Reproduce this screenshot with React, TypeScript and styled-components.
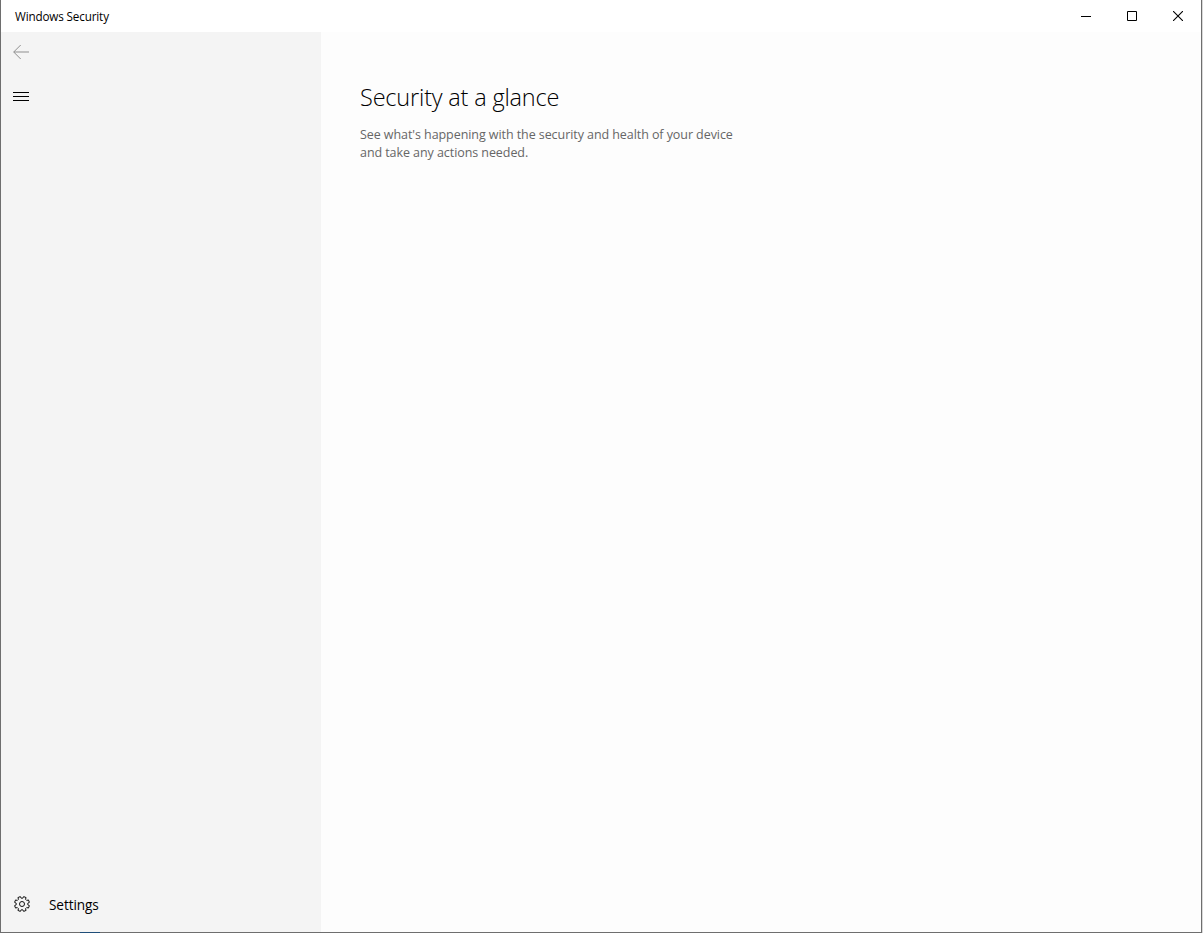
import styled, { createGlobalStyle } from "styled-components";

const GlobalStyle = createGlobalStyle`
    * {
        box-sizing: border-box;
    }

    body {
        margin: 0;
        overflow: hidden;
        background: #d9d9d9;
        font-family: "Open Sans", "Noto Sans", sans-serif;
    }

    h1, p {
        margin: 0;
    }
`

const StyleWindow = styled.div`
    width: 1202px;
    height: 933px;

    display: flex;
    flex-direction: column;
    position: relative;

    border: 1px solid #6e6e6e;
    border-top: none;
    background: #fdfdfd;
`

const StyleTitleBar = styled.header`
    height: 32px;
    flex-shrink: 0;

    display: flex;
    justify-content: space-between;
    background: #ffffff;

    .title {
        padding-left: 14px;
        font-size: 11.7px;
        line-height: 33px;
        letter-spacing: -0.15px;
        color: #000000;
    }
`

const StyleControls = styled.div`
    display: flex;
`

const StyleControlButton = styled.button`
    width: 46px;
    height: 32px;

    display: flex;
    align-items: center;
    justify-content: center;

    padding: 0;
    border: none;
    background: transparent;
`

const StyleContent = styled.div`
    flex: 1;
    display: flex;
`

const StyleSidebar = styled.nav`
    width: 320px;

    display: flex;
    flex-direction: column;
    background: #f4f4f4;
`

const StyleNavButton = styled.button<{ $height: number }>`
    width: 40px;
    height: ${({ $height }) => $height}px;

    display: flex;
    align-items: center;
    justify-content: center;

    padding: 0;
    border: none;
    background: transparent;
`

const StyleSettings = styled.a`
    height: 40px;

    display: flex;
    align-items: center;
    gap: 18px;

    margin-top: auto;
    margin-bottom: 8px;
    padding-left: 12px;

    font-size: 13.6px;
    line-height: 20px;
    letter-spacing: -0.08px;
    color: #000000;

    span {
        padding-top: 2px;
    }
`

const StyleMain = styled.main`
    flex: 1;
    padding: 47px 0 0 39px;

    h1 {
        font-size: 23.5px;
        font-weight: 350;
        line-height: 36px;
        letter-spacing: -0.18px;
        color: #000000;
    }

    p {
        width: 390px;
        margin-top: 11px;

        font-size: 12.5px;
        line-height: 18px;
        letter-spacing: -0.07px;
        color: #666666;
    }
`

const StyleAccent = styled.div`
    position: absolute;
    left: 79px;
    bottom: -1px;

    width: 20px;
    height: 1px;
    background: #1f4e79;
`

const TEETH = 8

// each tooth: rise, flat top, fall, then the valley before the next one
const gearPath = () => {
    const points: string[] = []
    for (let i = 0; i < TEETH; i++) {
        const steps = [[-14, 5.9], [-10, 7.6], [10, 7.6], [14, 5.9]]
        steps.forEach(([offset, radius]) => {
            const angle = ((i * 360 / TEETH + 22.5 + offset) * Math.PI) / 180
            points.push(`${(8 + radius * Math.cos(angle)).toFixed(2)} ${(8 + radius * Math.sin(angle)).toFixed(2)}`)
        })
    }
    return `M${points.join("L")}Z`
}

const GearIcon = () => (
    <svg width="18" height="16" viewBox="-1 0 18 16" fill="none" stroke="#111111">
        <path d={gearPath()} strokeLinejoin="round" />
        <circle cx="8" cy="8" r="2.5" />
    </svg>
)

const TitleBar = () => {
    return (
        <StyleTitleBar>
            <p className="title">Windows Security</p>
            <StyleControls>
                <StyleControlButton aria-label="Minimize">
                    <svg width="10" height="10" viewBox="0 0 10 10">
                        <path d="M0 5.5H10" stroke="#000000" />
                    </svg>
                </StyleControlButton>
                <StyleControlButton aria-label="Maximize">
                    <svg width="10" height="10" viewBox="0 0 10 10">
                        <path d="M.5.5H9.5V9.5H.5Z" fill="none" stroke="#000000" />
                    </svg>
                </StyleControlButton>
                <StyleControlButton aria-label="Close">
                    <svg width="10" height="10" viewBox="0 0 10 10">
                        <path d="M0 0L10 10M10 0L0 10" stroke="#000000" strokeWidth="1.1" />
                    </svg>
                </StyleControlButton>
            </StyleControls>
        </StyleTitleBar>
    )
}

const Sidebar = () => {
    return (
        <StyleSidebar>
            <StyleNavButton $height={40} aria-label="Back">
                <svg width="16" height="16" viewBox="0 0 16 16" fill="none" stroke="#8f8f8f">
                    <path d="M.8 8H16M7.7 1L.7 8L7.7 15" />
                </svg>
            </StyleNavButton>
            <StyleNavButton $height={48} aria-label="Menu">
                <svg width="16" height="16" viewBox="0 0 16 16">
                    <path d="M0 4.5H16M0 8.5H16M0 12.5H16" stroke="#000000" />
                </svg>
            </StyleNavButton>
            <StyleSettings>
                <GearIcon />
                <span>Settings</span>
            </StyleSettings>
        </StyleSidebar>
    )
}

export default function App() {
    return (
        <>
            <GlobalStyle />
            <StyleWindow>
                <TitleBar />
                <StyleContent>
                    <Sidebar />
                    <StyleMain>
                        <h1>Security at a glance</h1>
                        <p>
                            See what's happening with the security and health of your device
                            <br />
                            and take any actions needed.
                        </p>
                    </StyleMain>
                </StyleContent>
                <StyleAccent />
            </StyleWindow>
        </>
    )
}
